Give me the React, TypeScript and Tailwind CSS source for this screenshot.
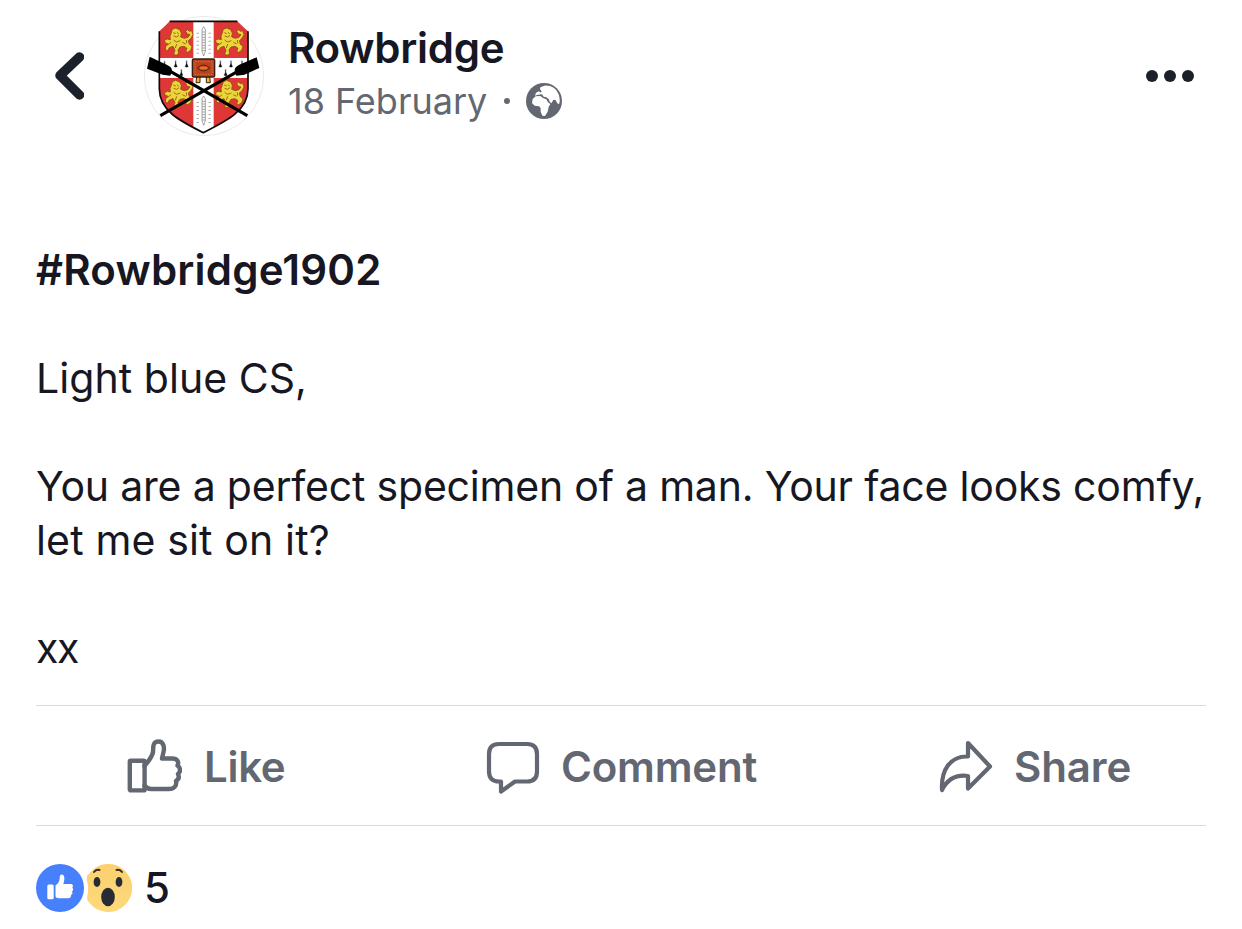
const BackIcon = () => (
  <svg viewBox="0 0 30 48" className="w-[30px] h-12" fill="none" stroke="#1b222c" strokeWidth="9.5" strokeLinecap="round" strokeLinejoin="round">
    <path d="M25.5 5 L6 23.5 L25.5 43" />
  </svg>
);

const Lion = ({ x, y }: { x: number; y: number }) => (
  <g transform={`translate(${x} ${y})`}>
    <path
      d="M24 4 L34 0 L46 5 L51 15 L49 27 L60 31 L71 28 L77 20 L69 18 L64 10 L70 5 L75 10 L82 8 L86 20 L80 31 L72 38 L75 49 L83 55 L79 67 L70 73 L64 70 L68 61 L59 55 L47 57 L41 66 L43 77 L35 82 L28 79 L32 67 L26 55 L15 59 L10 68 L3 65 L4 56 L12 48 L3 45 L0 37 L9 33 L18 35 L17 25 L20 17 Z"
      fill="#ead63a"
      stroke="#8f4c13"
      strokeWidth="2.5"
      strokeLinejoin="round"
    />
    <path
      d="M27 14 L34 17 M39 13 L43 18 M28 24 L37 27 L44 22 M28 36 L36 42 L48 38 M54 43 L64 48 M20 43 L12 50 M37 48 L33 60 M66 36 L67 46"
      fill="none"
      stroke="#a5651b"
      strokeWidth="3"
    />
  </g>
);

const Ermine = ({ x, y }: { x: number; y: number }) => (
  <path
    transform={`translate(${x} ${y})`}
    d="M0 -10 L1.5 1 L5 9 L0 11 L-5 9 L-1.5 1 Z M-4 -6 H4"
    fill="#111"
    stroke="#111"
    strokeWidth="0.6"
  />
);

const Motif = ({ y }: { y: number }) => (
  <g transform={`translate(209 ${y})`} fill="none" stroke="#777" strokeWidth="2">
    <path d="M0 0 L5 8 V74 L0 88 L-5 74 V8 Z" />
    <path d="M-5 16 H5 M-5 24 H5 M-5 32 H5 M-5 40 H5 M-5 48 H5 M-5 56 H5 M-5 64 H5 M-5 72 H5" />
    <path d="M-18 18 V82 M18 18 V82" stroke="#b5b5b5" strokeWidth="8" strokeDasharray="3 9" />
  </g>
);

const Crest = () => (
  <svg viewBox="30 30 360 360" className="w-[120px] h-[120px]">
    <circle cx="210" cy="210" r="179" fill="#fff" stroke="#e6e6e6" strokeWidth="2.5" />
    <path d="M107 46 H310 Q326 62 342 76 V248 C342 315 276 346 208 380 C140 346 76 315 76 248 V76 Q92 62 107 46 Z" fill="#df3735" />
    <path d="M178 48 H239 V364 L208 379 L178 364 Z M78 156 H341 V216 H78 Z" fill="#fff" />
    <Motif y={62} />
    <Motif y={270} />
    <Lion x={91} y={66} />
    <Lion x={244} y={66} />
    <Lion x={91} y={223} />
    <Lion x={244} y={223} />
    <Ermine x={92} y={174} />
    <Ermine x={125} y={173} />
    <Ermine x={158} y={173} />
    <Ermine x={142} y={199} />
    <Ermine x={259} y={173} />
    <Ermine x={291} y={173} />
    <Ermine x={324} y={173} />
    <Ermine x={275} y={199} />
    <path d="M107 46 H310 M342 76 V248 C342 315 276 346 208 380 C140 346 76 315 76 248 V76" fill="none" stroke="#0b0b0b" strokeWidth="5" />
    <path d="M188 212 H198 V230 H186 Z M217 212 H227 L229 230 H217 Z" fill="#e8c22e" stroke="#3b1c10" strokeWidth="3" />
    <rect x="175" y="159" width="67" height="54" rx="4" fill="#b8431f" stroke="#3b1c10" strokeWidth="4" />
    <rect x="183" y="167" width="51" height="38" fill="none" stroke="#e08a3a" strokeWidth="2" strokeDasharray="5 3" />
    <path d="M190 186 Q209 168 228 186 Q209 204 190 186 Z" fill="#d9471f" stroke="#55200e" strokeWidth="3" />
    <path d="M198 186 H219" stroke="#eda03a" strokeWidth="3" />
    <path d="M105 194 L340 329 M315 194 L79 329" stroke="#000" strokeWidth="9.5" />
    <path d="M47 152 L98 176 Q115 183 114 195 L109 209 L86 206 L39 188 Z M368 154 L316 176 Q301 183 302 195 L307 209 L331 206 L376 186 Z" fill="#000" />
  </svg>
);

const GlobeIcon = () => (
  <svg viewBox="0 0 108 108" className="w-9 h-9">
    <circle cx="54" cy="54" r="54" fill="#626771" />
    <path d="M43 13 L55 8 Q87 6 98 34 Q104 53 99 64 L94 61 L88 50 L82 51 L76 61 L71 56 L68 48 L61 43 L53 41 L48 34 L36 35 L27 38 L30 29 L39 25 L43 29 L47 25 L42 19 Z" fill="#fff" />
    <path d="M20 48 L29 40 L43 39 L51 45 L61 49 L66 58 L73 63 L68 72 L65 86 L57 99 L49 98 L44 86 L44 75 L39 70 L26 68 L18 60 Z" fill="#fff" />
  </svg>
);

const LikeIcon = () => (
  <svg viewBox="0 0 56 56" className="w-14 h-14" fill="none" stroke="#626771" strokeWidth="4.4" strokeLinejoin="round" strokeLinecap="round">
    <rect x="3.8" y="21.8" width="14.8" height="29.6" rx="1" />
    <path d="M18.5 27 C21 24 26 18.5 27 13 C27.5 9 26 2.5 32.5 2.5 C38 2.5 38.5 9 37.5 13 L36 19.5 H46 C52 19.5 53 23.5 51.5 26.5 C55 29 54.5 33 52 35 C53.5 38 52.5 40.5 50 42 C51 47 48 50 43 50 H25 C21 50 20 48.5 18.5 46.5" />
  </svg>
);

const CommentIcon = () => (
  <svg viewBox="0 0 54 54" className="w-[54px] h-[54px]" fill="none" stroke="#626771" strokeWidth="4.2" strokeLinejoin="round">
    <path d="M13 4 H41 Q51 4 51 14 V31.5 Q51 41.5 41 41.5 H29 L15 51.5 V41.5 H13 Q3 41.5 3 31.5 V14 Q3 4 13 4 Z" />
  </svg>
);

const ShareIcon = () => (
  <svg viewBox="0 0 54 54" className="w-[54px] h-[54px]" fill="none" stroke="#626771" strokeWidth="4.2" strokeLinejoin="round">
    <path d="M29 3 L51 26.5 L29 48.5 V36 C18 34.5 9 38 3 50 C2 30 11 16 29 16.5 Z" />
  </svg>
);

const LikeReaction = () => (
  <svg viewBox="0 0 48 48" className="w-12 h-12">
    <circle cx="24" cy="24" r="24" fill="#4680fc" />
    <rect x="11.3" y="20.5" width="6.4" height="14.8" rx="1.5" fill="#fff" />
    <path d="M19.5 21.5 C22 19.5 23.5 17.5 23.7 14.5 C23.5 11.5 24.5 10.5 25.5 10.5 C29 10.5 29 15.5 27.3 20 H34.5 C37 20 37.5 22 36.3 23.5 C37.5 25 37.3 26.5 36 27.5 C37 29.3 36.3 30.5 35 31 C35.3 33.5 34 34.2 32 34.2 H23 C21 34.2 19.5 33.5 19.5 32 Z" fill="#fff" />
  </svg>
);

const WowReaction = () => (
  <svg viewBox="0 0 48 48" className="w-12 h-12">
    <defs>
      <linearGradient id="wow" x1="0" y1="0" x2="0" y2="1">
        <stop offset="0" stopColor="#fbd06f" />
        <stop offset="1" stopColor="#fdd97b" />
      </linearGradient>
    </defs>
    <path d="M5.5 9 A24 24 0 1 1 5.5 39 C2.5 36 3 34 3.5 31 Q5 24 3 17 Q2 12 5.5 9 Z" fill="url(#wow)" />
    <ellipse cx="13" cy="18" rx="3.4" ry="5" fill="#272b35" />
    <ellipse cx="35" cy="18" rx="3.4" ry="5" fill="#272b35" />
    <ellipse cx="24" cy="33" rx="6.8" ry="9.3" fill="#272b35" />
    <path d="M10 8 Q12 5 15.5 6 M32.5 6 Q36 5 38 8" stroke="#352c29" strokeWidth="2" fill="none" strokeLinecap="round" />
  </svg>
);

export default function App() {
  return (
    <div className="w-[1242px] h-[929px] overflow-hidden bg-white text-[#161722] font-['Inter',sans-serif] text-[41px] leading-[54px]">
      {/* Header */}
      <header className="flex items-center h-[152px] pl-[54px] pr-12">
        <BackIcon />
        <div className="ml-[60px]">
          <Crest />
        </div>
        <div className="ml-6 -mt-[5px] flex-1">
          <h1 className="font-semibold text-[42px] leading-[54px] tracking-[-0.25px]">Rowbridge</h1>
          <div className="flex items-center text-[36px] text-[#626771] leading-[52px]">
            <span className="whitespace-nowrap">18 February</span>
            <span className="w-[6px] h-[6px] rounded-full bg-[#626771] ml-[17px] mr-4" />
            <GlobeIcon />
          </div>
        </div>
        <div className="flex gap-[6px]">
          <span className="w-3 h-3 rounded-full bg-[#1b2029]" />
          <span className="w-3 h-3 rounded-full bg-[#1b2029]" />
          <span className="w-3 h-3 rounded-full bg-[#1b2029]" />
        </div>
      </header>

      {/* Post text */}
      <main className="mx-9 pt-[91px] pb-[30px] whitespace-nowrap border-b border-[#d8dade]">
        <p className="font-semibold text-[42px] leading-[54px] tracking-[0.2px] mb-[54px]">#Rowbridge1902</p>
        <p className="tracking-[0.05px] mb-[54px]">Light blue CS,</p>
        <p className="tracking-[-0.2px]">You are a perfect specimen of a man. Your face looks comfy,</p>
        <p className="tracking-[0.15px] mb-[54px]">let me sit on it?</p>
        <p className="tracking-[-1.5px]">xx</p>
      </main>

      {/* Actions */}
      <nav className="mx-9 pt-[3px] flex items-center h-[120px] border-b border-[#d8dade] font-semibold text-[42px] text-[#626771]">
        <button className="flex items-center ml-[90px]">
          <LikeIcon />
          <span className="ml-[22px] w-[282px] text-left tracking-[-0.3px]">Like</span>
        </button>
        <button className="flex items-center">
          <CommentIcon />
          <span className="ml-[21px] w-[378px] text-left tracking-[-0.2px]">Comment</span>
        </button>
        <button className="flex items-center">
          <ShareIcon />
          <span className="ml-[21px] tracking-[-0.1px]">Share</span>
        </button>
      </nav>

      {/* Reactions */}
      <footer className="flex items-center mx-9 pt-[35px]">
        <LikeReaction />
        <WowReaction />
        <span className="ml-3 text-[42px] font-medium">5</span>
      </footer>
    </div>
  );
}
